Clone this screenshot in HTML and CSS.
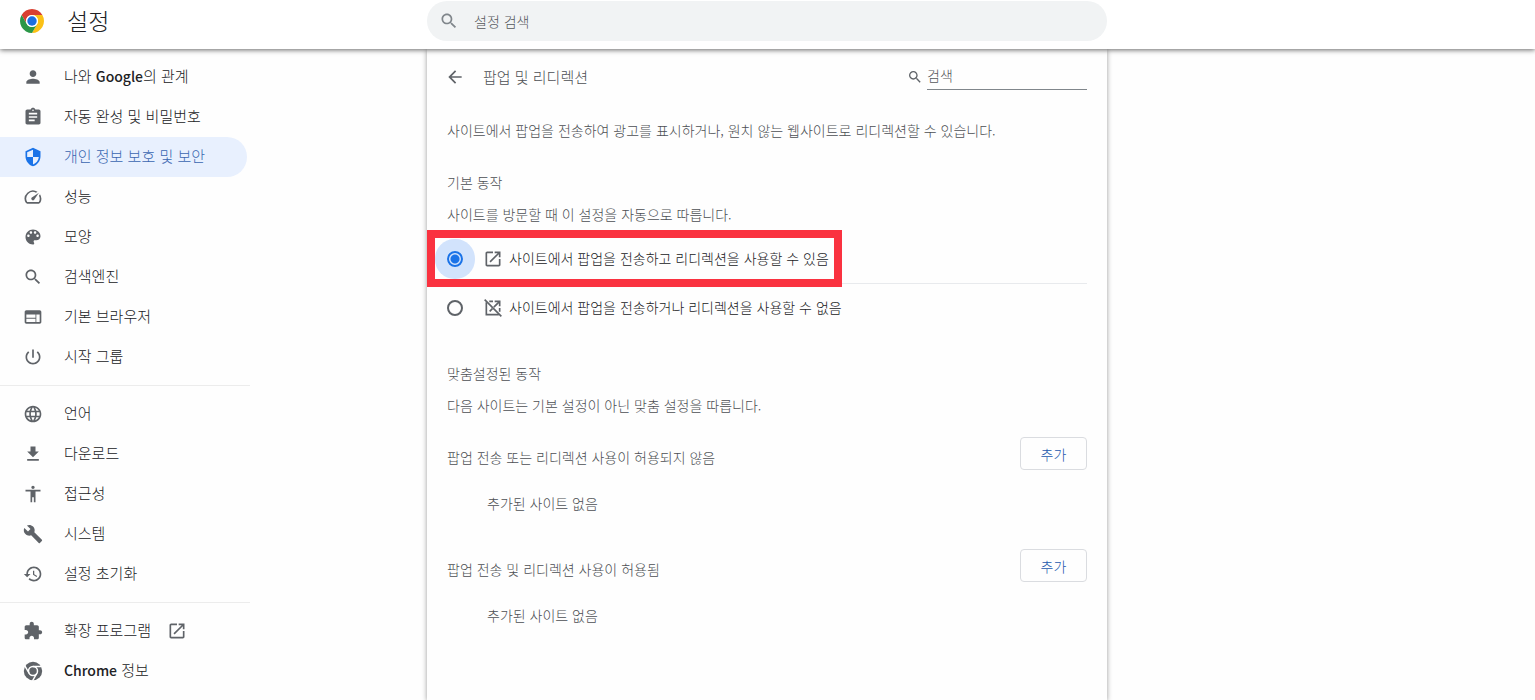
FILE: index.html
```html
<!DOCTYPE html>
<html lang="ko">
<head>
    <meta charset="UTF-8">
    <meta name="viewport" content="width=device-width, initial-scale=1.0">
    <title>설정</title>
    <link rel="stylesheet" href="styles.css">
</head>
<body>
    <header class="toolbar">
        <div class="brand">
            <svg class="logo" viewBox="0 0 48 48" aria-hidden="true">
                <path fill="#d93f30" d="M3.22 12A24 24 0 0 1 44.78 12H24A12 12 0 0 0 13.6 30z"/>
                <path fill="#fbc116" d="M44.78 12A24 24 0 0 1 24 48L34.4 30A12 12 0 0 0 24 12z"/>
                <path fill="#2b9747" d="M24 48A24 24 0 0 1 3.22 12L13.6 30A12 12 0 0 0 34.4 30z"/>
                <circle cx="24" cy="24" r="12" fill="#fff"/>
                <circle cx="24" cy="24" r="9.4" fill="#1c6fe0"/>
            </svg>
            <h1>설정</h1>
        </div>
        <label class="search">
            <svg class="icon" viewBox="0 0 24 24" aria-hidden="true"><use href="#i-search"/></svg>
            <input type="search" placeholder="설정 검색" aria-label="설정 검색">
        </label>
    </header>

    <div class="container">
        <nav class="sidebar">
            <a href="#"><svg class="icon" viewBox="0 0 24 24"><path d="M12 12c2.21 0 4-1.79 4-4s-1.79-4-4-4-4 1.79-4 4 1.79 4 4 4zm0 2c-2.67 0-8 1.34-8 4v2h16v-2c0-2.66-5.33-4-8-4z"/></svg><span>나와 <b>Google</b>의 관계</span></a>
            <a href="#"><svg class="icon" viewBox="0 0 24 24"><path d="M19 3h-4.18C14.4 1.84 13.3 1 12 1c-1.3 0-2.4.84-2.82 2H5c-1.1 0-2 .9-2 2v14c0 1.1.9 2 2 2h14c1.1 0 2-.9 2-2V5c0-1.1-.9-2-2-2zm-7 0c.55 0 1 .45 1 1s-.45 1-1 1-1-.45-1-1 .45-1 1-1zm2 14H7v-2h7v2zm3-4H7v-2h10v2zm0-4H7V7h10v2z"/></svg><span>자동 완성 및 비밀번호</span></a>
            <a href="#" class="selected"><svg class="icon" viewBox="0 0 24 24"><path d="M12 1L3 5v6c0 5.55 3.84 10.74 9 12 5.16-1.26 9-6.45 9-12V5l-9-4zm0 10.99h7c-.53 4.12-3.28 7.79-7 8.94V12H5V6.3l7-3.11v8.8z"/></svg><span>개인 정보 보호 및 보안</span></a>
            <a href="#"><svg class="icon" viewBox="0 0 24 24"><path d="M20.38 8.57l-1.23 1.85a8 8 0 0 1-.22 7.58H5.07A8 8 0 0 1 15.58 6.85l1.85-1.23A10 10 0 0 0 3.35 19a2 2 0 0 0 1.72 1h13.85a2 2 0 0 0 1.74-1 10 10 0 0 0-.27-10.44zm-9.79 6.84a2 2 0 0 0 2.83 0l5.66-8.49-8.49 5.66a2 2 0 0 0 0 2.83z"/></svg><span>성능</span></a>
            <a href="#"><svg class="icon" viewBox="0 0 24 24"><path d="M12 3c-4.97 0-9 4.03-9 9s4.03 9 9 9c.83 0 1.5-.67 1.5-1.5 0-.39-.15-.74-.39-1.01-.23-.26-.38-.61-.38-.99 0-.83.67-1.5 1.5-1.5H16c2.76 0 5-2.24 5-5 0-4.42-4.03-8-9-8zm-5.5 9c-.83 0-1.5-.67-1.5-1.5S5.67 9 6.5 9 8 9.67 8 10.5 7.33 12 6.5 12zm3-4C8.67 8 8 7.33 8 6.5S8.67 5 9.5 5s1.5.67 1.5 1.5S10.33 8 9.5 8zm5 0c-.83 0-1.5-.67-1.5-1.5S13.67 5 14.5 5s1.5.67 1.5 1.5S15.33 8 14.5 8zm3 4c-.83 0-1.5-.67-1.5-1.5S16.67 9 17.5 9s1.5.67 1.5 1.5-.67 1.5-1.5 1.5z"/></svg><span>모양</span></a>
            <a href="#"><svg class="icon" viewBox="0 0 24 24"><path id="i-search" d="M15.5 14h-.79l-.28-.27C15.41 12.59 16 11.11 16 9.5 16 5.91 13.09 3 9.5 3S3 5.91 3 9.5 5.91 16 9.5 16c1.61 0 3.09-.59 4.23-1.57l.27.28v.79l5 4.99L20.49 19l-4.99-5zm-6 0C7.01 14 5 11.99 5 9.5S7.01 5 9.5 5 14 7.01 14 9.5 11.99 14 9.5 14z"/></svg><span>검색엔진</span></a>
            <a href="#"><svg class="icon" viewBox="0 0 24 24"><path d="M20 4H4c-1.1 0-1.99.9-1.99 2L2 18c0 1.1.9 2 2 2h16c1.1 0 2-.9 2-2V6c0-1.1-.9-2-2-2zm-5 14H4v-4h11v4zm0-5H4V9h11v4zm5 5h-4V9h4v9z"/></svg><span>기본 브라우저</span></a>
            <a href="#"><svg class="icon" viewBox="0 0 24 24"><path d="M13 3h-2v10h2V3zm4.83 2.17l-1.42 1.42C17.99 7.86 19 9.81 19 12c0 3.87-3.13 7-7 7s-7-3.13-7-7c0-2.19 1.01-4.14 2.58-5.42L6.17 5.17C4.23 6.82 3 9.26 3 12c0 4.97 4.03 9 9 9s9-4.03 9-9c0-2.74-1.23-5.18-3.17-6.83z"/></svg><span>시작 그룹</span></a>
            <hr>
            <a href="#"><svg class="icon" viewBox="0 0 24 24"><path d="M11.99 2C6.47 2 2 6.48 2 12s4.47 10 9.99 10C17.52 22 22 17.52 22 12S17.52 2 11.99 2zm6.93 6h-2.95c-.32-1.25-.78-2.45-1.38-3.56 1.84.63 3.37 1.91 4.33 3.56zM12 4.04c.83 1.2 1.48 2.53 1.91 3.96h-3.82c.43-1.43 1.08-2.76 1.91-3.96zM4.26 14C4.1 13.36 4 12.69 4 12s.1-1.36.26-2h3.38c-.08.66-.14 1.32-.14 2s.06 1.34.14 2H4.26zm.82 2h2.95c.32 1.25.78 2.45 1.38 3.56-1.84-.63-3.37-1.9-4.33-3.56zm2.95-8H5.08c.96-1.66 2.49-2.93 4.33-3.56C8.81 5.55 8.35 6.75 8.03 8zM12 19.96c-.83-1.2-1.48-2.53-1.91-3.96h3.82c-.43 1.43-1.08 2.76-1.91 3.96zM14.34 14H9.66c-.09-.66-.16-1.32-.16-2s.07-1.35.16-2h4.68c.09.65.16 1.32.16 2s-.07 1.34-.16 2zm.25 5.56c.6-1.11 1.06-2.31 1.38-3.56h2.95c-.96 1.65-2.49 2.93-4.33 3.56zM16.36 14c.08-.66.14-1.32.14-2s-.06-1.34-.14-2h3.38c.16.64.26 1.31.26 2s-.1 1.36-.26 2h-3.38z"/></svg><span>언어</span></a>
            <a href="#"><svg class="icon" viewBox="0 0 24 24"><path d="M19 9h-4V3H9v6H5l7 7 7-7zM5 18v2h14v-2H5z"/></svg><span>다운로드</span></a>
            <a href="#"><svg class="icon" viewBox="0 0 24 24"><path d="M12 2c1.1 0 2 .9 2 2s-.9 2-2 2-2-.9-2-2 .9-2 2-2zm9 7h-6v13h-2v-6h-2v6H9V9H3V7h18v2z"/></svg><span>접근성</span></a>
            <a href="#"><svg class="icon" viewBox="0 0 24 24"><path d="M22.7 19l-9.1-9.1c.9-2.3.4-5-1.5-6.9-2-2-5-2.4-7.4-1.3L9 6 6 9 1.6 4.7C.4 7.1.9 10.1 2.9 12.1c1.9 1.9 4.6 2.4 6.9 1.5l9.1 9.1c.4.4 1 .4 1.4 0l2.3-2.3c.5-.4.5-1.1.1-1.4z"/></svg><span>시스템</span></a>
            <a href="#"><svg class="icon" viewBox="0 0 24 24"><path d="M13 3c-4.97 0-9 4.03-9 9H1l3.89 3.89.07.14L9 12H6c0-3.87 3.13-7 7-7s7 3.13 7 7-3.13 7-7 7c-1.93 0-3.68-.79-4.94-2.06l-1.42 1.42C8.27 19.99 10.51 21 13 21c4.97 0 9-4.03 9-9s-4.03-9-9-9zm-1 5v5l4.28 2.54.72-1.21-3.5-2.08V8H12z"/></svg><span>설정 초기화</span></a>
            <hr>
            <a href="#"><svg class="icon" viewBox="0 0 24 24"><path d="M20.5 11H19V7c0-1.1-.9-2-2-2h-4V3.5C13 2.12 11.88 1 10.5 1S8 2.12 8 3.5V5H4c-1.1 0-1.99.9-1.99 2v3.8H3.5c1.49 0 2.7 1.21 2.7 2.7s-1.21 2.7-2.7 2.7H2V20c0 1.1.9 2 2 2h3.8v-1.5c0-1.49 1.21-2.7 2.7-2.7 1.49 0 2.7 1.21 2.7 2.7V22H17c1.1 0 2-.9 2-2v-4h1.5c1.38 0 2.5-1.12 2.5-2.5S21.88 11 20.5 11z"/></svg><span>확장 프로그램</span><svg class="icon launch" viewBox="0 0 24 24"><path id="i-open" d="M19 19H5V5h7V3H5c-1.11 0-2 .9-2 2v14c0 1.1.89 2 2 2h14c1.1 0 2-.9 2-2v-7h-2v7zM14 3v2h3.59l-9.83 9.83 1.41 1.41L19 6.41V10h2V3h-7z"/></svg></a>
            <a href="#"><svg class="icon" viewBox="0 0 24 24"><circle cx="12" cy="12" r="11"/><g fill="none" stroke="#fff" stroke-width="1.8"><circle cx="12" cy="12" r="5.4"/><path d="M12 6.6h10.5M7.32 14.7L2.07 5.6M16.68 14.7l-5.25 9.1"/></g></svg><span><b>Chrome</b> 정보</span></a>
        </nav>

        <main class="card">
            <div class="page-header">
                <button type="button" class="back-btn" aria-label="뒤로">
                    <svg class="icon" viewBox="0 0 24 24"><path d="M20 11H7.83l5.59-5.59L12 4l-8 8 8 8 1.41-1.41L7.83 13H20v-2z"/></svg>
                </button>
                <h2>팝업 및 리디렉션</h2>
                <label class="page-search">
                    <svg class="icon" viewBox="0 0 24 24" aria-hidden="true"><use href="#i-search"/></svg>
                    <input type="search" placeholder="검색" aria-label="검색">
                </label>
            </div>

            <p class="intro">사이트에서 팝업을 전송하여 광고를 표시하거나, 원치 않는 웹사이트로 리디렉션할 수 있습니다.</p>

            <section>
                <h3>기본 동작</h3>
                <p>사이트를 방문할 때 이 설정을 자동으로 따릅니다.</p>
                <div class="options">
                    <label class="option highlighted">
                        <input type="radio" name="popups" checked>
                        <svg class="icon" viewBox="0 0 24 24"><use href="#i-open"/></svg>
                        <span>사이트에서 팝업을 전송하고 리디렉션을 사용할 수 있음</span>
                    </label>
                    <label class="option">
                        <input type="radio" name="popups">
                        <svg class="icon" viewBox="0 0 24 24">
                            <g fill="none" stroke="#5f6368" stroke-width="2">
                                <path d="M4 5V20H19M7.5 4H12M20 12V16.5M14 4H20V10"/>
                                <path d="M8 16L11.3 12.7M13 11L20 4"/>
                                <path d="M2 2L22 22"/>
                            </g>
                        </svg>
                        <span>사이트에서 팝업을 전송하거나 리디렉션을 사용할 수 없음</span>
                    </label>
                </div>
            </section>

            <section>
                <h3>맞춤설정된 동작</h3>
                <p>다음 사이트는 기본 설정이 아닌 맞춤 설정을 따릅니다.</p>

                <div class="site-list">
                    <div class="site-header">
                        <h4>팝업 전송 또는 리디렉션 사용이 허용되지 않음</h4>
                        <button type="button" class="add-btn">추가</button>
                    </div>
                    <p class="empty">추가된 사이트 없음</p>
                </div>

                <div class="site-list">
                    <div class="site-header">
                        <h4>팝업 전송 및 리디렉션 사용이 허용됨</h4>
                        <button type="button" class="add-btn">추가</button>
                    </div>
                    <p class="empty">추가된 사이트 없음</p>
                </div>
            </section>
        </main>
    </div>
</body>
</html>
```
FILE: styles.css
```css
*, *::after { margin: 0; padding: 0; box-sizing: border-box; }

body {
    font-family: "Noto Sans CJK KR", sans-serif;
    font-size: 14px;
    font-weight: 300;
    line-height: 20px;
    color: #4c4f53;
    background: #fefefe;
    min-height: 100vh;
    display: flex;
    flex-direction: column;
}

h1, h2, h3, h4 { font-size: 14px; font-weight: 300; }

input, button {
    font: inherit;
    color: inherit;
    border: none;
    background: none;
    outline: none;
}

input::placeholder { color: #55585c; opacity: 1; }

.icon {
    width: 20px;
    height: 20px;
    flex: none;
    fill: #5f6368;
}

/* Top bar */
.toolbar,
.container {
    display: grid;
    grid-template-columns: minmax(250px, 1fr) minmax(0, 680px) minmax(0, 1fr);
    padding-right: 1px;
}

.toolbar {
    position: relative;
    z-index: 1;
    height: 49px;
    background: white;
    box-shadow: 0 1px 5px rgba(0,0,0,0.6);
}

.brand {
    display: flex;
    align-items: center;
    gap: 23px;
    height: 42px;
    padding-left: 20px;
}

.logo { width: 24px; height: 24px; }

h1 {
    padding-bottom: 2px;
    font-size: 23px;
    line-height: 32px;
    color: #202124;
}

.search {
    display: flex;
    align-items: center;
    gap: 15px;
    height: 40px;
    margin-top: 1px;
    padding: 0 12px;
    border-radius: 20px;
    background: #f1f3f4;
}

.search .icon { fill: #80868b; }
.search input { flex: 1; }

/* Side menu */
.container { flex: 1; }

.sidebar { padding: 8px 0; }

.sidebar a {
    display: flex;
    align-items: center;
    gap: 21px;
    width: 247px;
    height: 40px;
    padding-left: 23px;
    border-radius: 0 20px 20px 0;
    font-size: 15px;
    color: #202124;
    text-decoration: none;
}

.sidebar span { padding-bottom: 2px; }
.sidebar b { font-size: 14px; font-weight: 500; }

.sidebar .selected { background: #e8f0fe; color: #3a66b0; }
.sidebar .selected .icon { fill: #1a73e8; }

.sidebar .launch { margin-left: -5px; }

.sidebar hr {
    width: 250px;
    height: 1px;
    margin: 8px 0;
    border: none;
    background: #ececec;
}

/* Content */
.card {
    padding: 8px 20px 40px;
    background: #fefefe;
    box-shadow: 0 1px 5px rgba(0,0,0,0.4);
}

.page-header {
    display: flex;
    align-items: center;
    height: 40px;
}

.back-btn { display: flex; margin: 0 18px 0 -2px; }
.back-btn, .page-search { cursor: pointer; }

h2 { flex: 1; font-size: 15px; }

.page-search {
    display: flex;
    align-items: center;
    gap: 4px;
}

.page-search .icon { width: 16px; height: 16px; }

.page-search input {
    width: 160px;
    height: 26px;
    padding-bottom: 3px;
    border-bottom: 1px solid #80868b;
}

.intro { margin-top: 23px; }

section { margin-top: 32px; }
section h3 { margin-bottom: 12px; }

.options { margin-top: 11px; }

.option {
    position: relative;
    display: flex;
    align-items: center;
    height: 48px;
    color: #202124;
}

.option + .option { border-top: 1px solid #e8eaed; }

.option .icon { margin: 0 6px 0 20px; }
.option span { padding-bottom: 2px; }

.option input {
    appearance: none;
    width: 16px;
    height: 16px;
    border: 2px solid #5f6368;
    border-radius: 50%;
}

.option input:checked {
    border-color: #1a73e8;
    background: radial-gradient(circle, #1a73e8 4px, #d2e3fc 5px);
    box-shadow: 0 0 0 12px #d2e3fc;
}

.highlighted::after {
    content: "";
    position: absolute;
    z-index: 1;
    top: -5px;
    left: -20px;
    width: 415px;
    height: 57px;
    border: 8px solid #fa3240;
    pointer-events: none;
}

.site-list { margin-top: 22px; }
.site-list + .site-list { margin-top: 36px; }

.site-header {
    display: flex;
    justify-content: space-between;
}

.site-header h4 { padding-top: 10px; }

.add-btn {
    width: 67px;
    height: 33px;
    border: 1px solid #dadce0;
    border-radius: 4px;
    color: #2459ad;
    cursor: pointer;
}

.empty { margin-top: 23px; padding-left: 40px; }
```
